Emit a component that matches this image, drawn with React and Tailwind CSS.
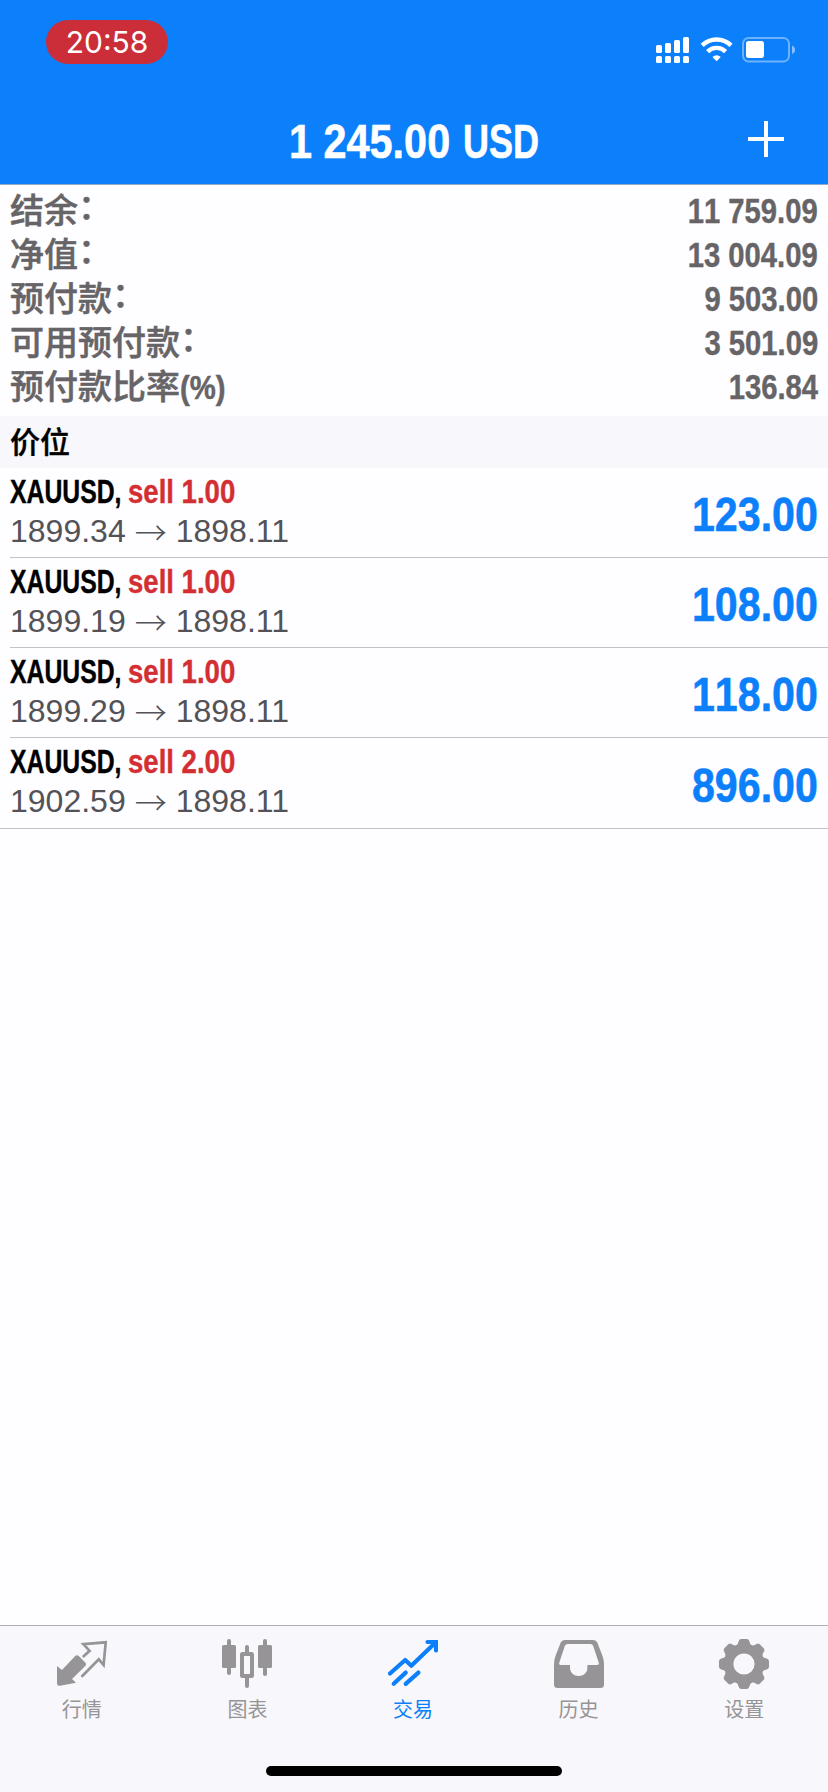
import React from "react";

const summary = [
  { label: "结余", suffix: "：", value: "11 759.09" },
  { label: "净值", suffix: "：", value: "13 004.09" },
  { label: "预付款", suffix: "：", value: "9 503.00" },
  { label: "可用预付款", suffix: "：", value: "3 501.09" },
  { label: "预付款比率", suffix: "(%)", value: "136.84" },
];

const positions = [
  { symbol: "XAUUSD", side: "sell 1.00", open: "1899.34", price: "1898.11", profit: "123.00" },
  { symbol: "XAUUSD", side: "sell 1.00", open: "1899.19", price: "1898.11", profit: "108.00" },
  { symbol: "XAUUSD", side: "sell 1.00", open: "1899.29", price: "1898.11", profit: "118.00" },
  { symbol: "XAUUSD", side: "sell 2.00", open: "1902.59", price: "1898.11", profit: "896.00" },
];

const QuotesIcon = () => (
  <svg viewBox="0 0 50 50" className="size-[50px]" fill="currentColor">
    <path d="M0 27 L5 31 L18 17.3 Q20 15.3 22 17.2 L28 23.3 Q30 25.3 28 27.2 L15 40 L19 43.7 L3 46.8 Q0 47.2 0 44.5Z" />
    <path d="M26.6 17.2 L32.6 11.8 L26.4 5.2 L48.7 3.3 L46.6 26 L41.8 20.3 L25.3 37" fill="none" stroke="currentColor" strokeWidth="2.7" strokeLinecap="round" />
  </svg>
);

const ChartIcon = () => (
  <svg viewBox="0 0 50 50" className="size-[50px]" fill="currentColor">
    <rect x="0" y="6" width="14" height="23" rx="1.5" />
    <rect x="5" y="0" width="4" height="36" rx="2" />
    <rect x="20" y="15" width="10" height="22" rx="0.5" fill="none" stroke="currentColor" strokeWidth="4" strokeLinejoin="round" />
    <rect x="23" y="6" width="4" height="9" rx="2" />
    <rect x="23" y="37" width="4" height="12" rx="2" />
    <rect x="36" y="6" width="14" height="23" rx="1.5" />
    <rect x="41" y="0" width="4" height="37" rx="2" />
  </svg>
);

const TradeIcon = () => (
  <svg viewBox="0 0 50 50" className="size-[50px]" fill="none" stroke="currentColor" strokeWidth="4.2" strokeLinecap="round" strokeLinejoin="round">
    <path d="M2 34.5 L17.2 21 L23.3 26.8 L46 5" />
    <path d="M39.5 3 H48 V11.5" strokeLinejoin="miter" />
    <path d="M5.7 44.8 L17.7 33.6 M17.7 44.8 L30.4 33.6" />
  </svg>
);

const HistoryIcon = () => (
  <svg viewBox="0 0 50 50" className="size-[50px]" fill="currentColor" fillRule="evenodd">
    <path d="M10.5 1 H39.5 Q42.3 1 43.3 3.5 L48.5 17 Q50 21 50 25 V45.5 Q50 49 46.5 49 H3.5 Q0 49 0 45.5 V25 Q0 21 1.5 17 L6.7 3.5 Q7.7 1 10.5 1Z M13.5 5 Q11.5 5 10.8 7 L5.3 23.5 Q4.6 26 7 26 H16 V28.5 C16 34 20 37 24.7 37 C29.4 37 33.4 34 33.4 28.5 V26 H43 Q45.4 26 44.7 23.5 L39.2 7 Q38.5 5 36.5 5Z" />
  </svg>
);

const TEETH = [0, 45, 90, 135, 180, 225, 270, 315];

const SettingsIcon = () => (
  <svg viewBox="0 0 50 50" className="size-[50px]" fill="currentColor">
    <circle cx="25" cy="25" r="15.4" fill="none" stroke="currentColor" strokeWidth="9.6" />
    {TEETH.map(a => (
      <path key={a} transform={`rotate(${a} 25 25)`} d="M17.4 9 V6.6 Q19 5.2 19.6 2.4 Q20.2 0 22.2 0 H27.8 Q29.8 0 30.4 2.4 Q31 5.2 32.6 6.6 V9Z" />
    ))}
  </svg>
);

const tabs = [
  { label: "行情", Icon: QuotesIcon },
  { label: "图表", Icon: ChartIcon },
  { label: "交易", Icon: TradeIcon, active: true },
  { label: "历史", Icon: HistoryIcon },
  { label: "设置", Icon: SettingsIcon },
];

const StatusIcons = () => (
  <svg viewBox="0 0 140 26" className="mt-[37px] h-[26px] w-[140px]" fill="white">
    <rect x="0" y="8" width="6" height="8" rx="1.5" />
    <rect x="9" y="6" width="6" height="10" rx="1.5" />
    <rect x="18" y="3" width="6" height="13" rx="1.5" />
    <rect x="27" y="0" width="6" height="16" rx="1.5" />
    <rect x="0" y="19" width="6" height="7" rx="1.5" />
    <rect x="9" y="19" width="6" height="7" rx="1.5" />
    <rect x="18" y="19" width="6" height="7" rx="1.5" />
    <rect x="27" y="19" width="6" height="7" rx="1.5" />
    <g fill="none" stroke="white" strokeWidth="4.4">
      <path d="M46.2 8.4 A20.5 20.5 0 0 1 75 8.4" />
      <path d="M51.6 14.6 A12.7 12.7 0 0 1 69.6 14.6" />
    </g>
    <path d="M56.4 19.9 Q60.6 16.4 64.8 19.9 L60.6 24.3Z" />
    <rect x="87" y="1" width="46" height="23.5" rx="5.5" fill="none" stroke="white" strokeOpacity="0.4" strokeWidth="2" />
    <rect x="90" y="4" width="18" height="17" rx="2.5" />
    <path d="M136 8.5 Q139 9.5 139 12.8 Q139 16 136 17Z" fillOpacity="0.5" />
  </svg>
);

export default function App() {
  return (
    <div className="flex h-[1792px] w-[828px] flex-col overflow-hidden bg-[#fefdff] font-['Liberation_Sans','Noto_Sans_CJK_SC',sans-serif] [font-kerning:none]">
      <header className="flex h-[185px] flex-col border-b border-[#8fa9cf] bg-[#0c7ffb] text-white">
        <div className="flex h-[96px] items-start justify-between pl-[46px] pr-[32px]">
          <div className="mt-5 flex h-11 w-[122px] items-center justify-center rounded-full bg-[#cb2e38] font-['Inter',sans-serif] text-[30px] leading-none">
            20:58
          </div>
          <StatusIcons />
        </div>
        <div className="grid h-[88px] grid-cols-[1fr_auto_1fr] items-center">
          <span />
          <h1 className="flex w-[250px] justify-between whitespace-nowrap text-[49px] font-bold leading-[90px] [-webkit-text-stroke:0.6px]">
            <span className="w-0 origin-left scale-x-[0.845]">1 245.00</span>
            <span className="flex w-0 origin-right scale-x-[0.735] justify-end">USD</span>
          </h1>
          <svg viewBox="0 0 36 36" className="-mt-[4px] mr-[44px] size-9 justify-self-end" stroke="white" strokeWidth="4">
            <path d="M18 0V36M0 18H36" />
          </svg>
        </div>
      </header>

      <section className="h-[231px] px-[10px] pt-[4px] text-[#666466]">
        {summary.map(row => (
          <div key={row.label} className="flex h-11 items-center justify-between">
            <span className="flex whitespace-nowrap text-[34px] font-medium leading-[44px] [-webkit-text-stroke:0.5px]">
              {row.label}
              {row.suffix === "：" ? (
                <span className="-mt-[4px]">{row.suffix}</span>
              ) : (
                <span className="origin-left scale-x-[0.86] font-bold">{row.suffix}</span>
              )}
            </span>
            <span className="origin-right scale-x-[0.835] whitespace-nowrap text-[35px] font-bold leading-[44px] [-webkit-text-stroke:0.4px]">
              {row.value}
            </span>
          </div>
        ))}
      </section>

      <div className="flex h-[52px] items-center bg-[#f8f7fb] px-[10px] pt-[2px] text-[30px] font-medium leading-none text-black [-webkit-text-stroke:0.4px]">
        价位
      </div>

      <ul className="border-b border-[#c3c2c6]">
        {positions.map((p, i) => (
          <li
            key={i}
            className={"ml-[10px] flex h-[90px] items-center justify-between pr-[10px] " + (i < positions.length - 1 ? "border-b border-[#c3c2c6]" : "")}
          >
            <div className="whitespace-nowrap">
              <div className="flex text-[33px] font-bold leading-[41px] text-black [-webkit-text-stroke:0.4px]">
                <span className="w-[118px] origin-left scale-x-[0.75]">{p.symbol},</span>
                <span className="origin-left scale-x-[0.835] text-[#d32f33]">{p.side}</span>
              </div>
              <div className="-mt-px flex text-[32px] leading-[41px] text-[#535257] [font-kerning:normal]">
                <span>{p.open}</span>
                <span className="mx-[9px] font-light">
                  <span className="font-['Noto_Sans_CJK_SC',sans-serif]">→</span>
                </span>
                <span>{p.price}</span>
              </div>
            </div>
            <span className="mt-1 origin-right scale-x-[0.84] text-[49px] font-bold leading-none text-[#0c7ffb] [-webkit-text-stroke:0.6px]">
              {p.profit}
            </span>
          </li>
        ))}
      </ul>

      <nav className="mt-auto flex h-[167px] flex-col border-t border-[#b0afb2] bg-[#f8f7fb]">
        <div className="-ml-px mr-px grid grid-cols-5 pt-[13px]">
          {tabs.map(({ label, Icon, active }) => (
            <div key={label} className={"flex flex-col items-center " + (active ? "text-[#0c7ffb]" : "text-[#969496]")}>
              <Icon />
              <span className="mt-[9px] font-['Noto_Sans_CJK_SC',sans-serif] text-[20px] leading-[22px]">{label}</span>
            </div>
          ))}
        </div>
        <div className="mx-auto mb-4 mt-auto h-[10px] w-[296px] rounded-full bg-black" />
      </nav>
    </div>
  );
}
